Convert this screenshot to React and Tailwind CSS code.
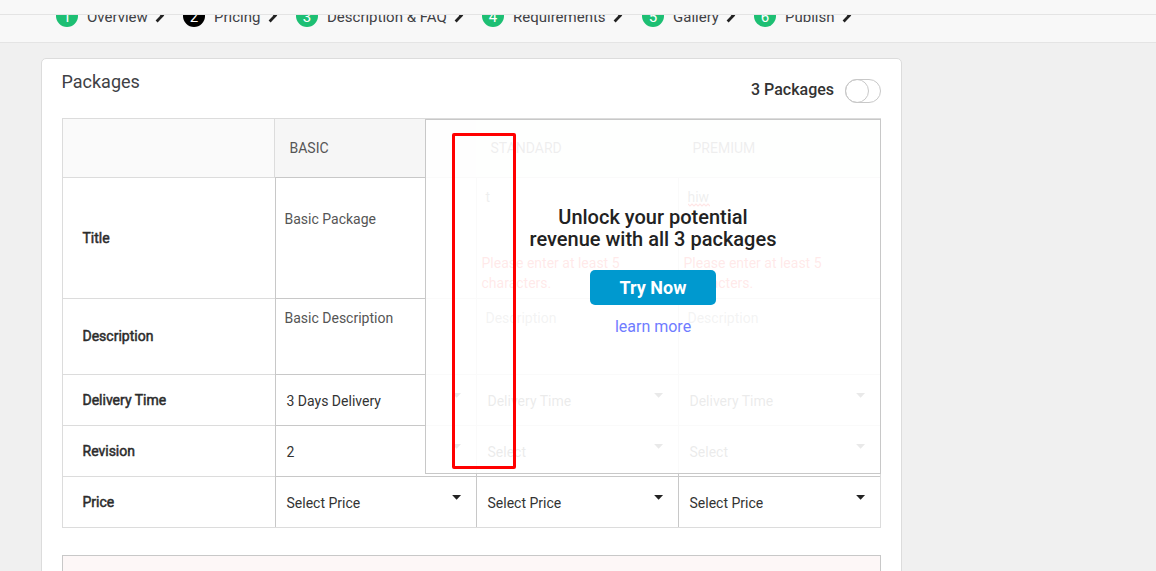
import React from "react";

const steps = [
  { n: 1, label: "Overview", width: "w-[127px]", dot: "bg-[#1dbf73]", text: "w-[68px]" },
  { n: 2, label: "Pricing", width: "w-[113px]", dot: "bg-black", text: "w-[54px]" },
  { n: 3, label: "Description & FAQ", width: "w-[186px]", dot: "bg-[#1dbf73]", text: "w-[127px]" },
  { n: 4, label: "Requirements", width: "w-[160px]", dot: "bg-[#1dbf73]", text: "w-[100px]" },
  { n: 5, label: "Gallery", width: "w-[112px]", dot: "bg-[#1dbf73]", text: "w-[53px]" },
  { n: 6, label: "Publish", width: "w-[112px]", dot: "bg-[#1dbf73]", text: "w-[57px]" },
];

function Chevron() {
  return (
    <svg width="10" height="14" viewBox="0 0 10 14" className="-mt-px shrink-0">
      <path d="M1.6 1 L7.3 6.6 L1.6 12.4" fill="none" stroke="#222" strokeWidth="2.8" />
    </svg>
  );
}

function Step({ n, label, width, dot, text }) {
  return (
    <div className={`flex h-[22px] shrink-0 items-center ${width}`}>
      <span className={`flex size-[22px] shrink-0 items-center justify-center rounded-full pt-[2px] text-[15px] leading-[20px] text-white ${dot}`}>
        {n}
      </span>
      <span className={`ml-[9px] mt-[2px] shrink-0 whitespace-nowrap text-[15px] leading-[22px] text-[#404145] ${text}`}>
        {label}
      </span>
      <Chevron />
    </div>
  );
}

function Label({ className = "", children }) {
  return (
    <div className={`flex items-center border-t border-[#dcdcdc] pl-[19.5px] text-[14px] text-[#2c2c2c] [-webkit-text-stroke:0.5px_#2c2c2c] ${className}`}>
      {children}
    </div>
  );
}

function Cell({ className = "", children }) {
  return <div className={`border-l border-t border-[#c8c8c8] ${className}`}>{children}</div>;
}

function SelectCell({ value }) {
  return (
    <Cell className="flex justify-between pl-[10.5px] pr-[14px] text-[14px] text-[#333]">
      <span className="mt-[16px] leading-[20px]">{value}</span>
      <svg width="10" height="5" viewBox="0 0 10 5" className="mt-[18px]">
        <path d="M0.1 0 H9.1 L4.6 4.8 Z" fill="#222" />
      </svg>
    </Cell>
  );
}

function Squiggle() {
  return (
    <svg width="22" height="4" viewBox="0 0 22 4" className="absolute left-0 top-[16px]">
      <path d="M0 1 L2 3 L4 1 L6 3 L8 1 L10 3 L12 1 L14 3 L16 1 L18 3 L20 1 L22 3" fill="none" stroke="#ff0000" strokeWidth="1.1" />
    </svg>
  );
}

function TitleCell({ value, misspelled }) {
  return (
    <Cell className="pl-[4.5px] text-[14px] leading-[20px]">
      <div className="mt-[9px] pl-[4px] text-[#555]">
        <span className="relative inline-block">
          {value}
          {misspelled && <Squiggle />}
        </span>
      </div>
      <div className="mt-[46px] w-[150px] text-[#ff2020]">Please enter at least 5 characters.</div>
    </Cell>
  );
}

function PackageTable() {
  return (
    <div className="relative mt-[18px] w-[819px]">
      <div className="border-b border-l border-r border-[#dcdcdc]">
        <div className="grid h-[59px] grid-cols-[211px_202px_202px_202px] border-t border-[#dcdcdc] bg-[#fafafa] text-[14px] text-[#555]">
          <div />
          <div className="flex items-center border-l border-[#dcdcdc] bg-[#f6f6f6] pl-[14.5px]">BASIC</div>
          <div className="flex items-center pl-[14.5px]">STANDARD</div>
          <div className="flex items-center pl-[14.5px]">PREMIUM</div>
        </div>
        <div className="grid grid-cols-[212px_201px_202px_202px] grid-rows-[121px_76px_51px_51px_51px]">
          <Label className="pt-px">Title</Label>
          <Cell className="pl-[8.5px] pt-[31px] text-[14px] leading-[20px] text-[#555]">Basic Package</Cell>
          <TitleCell value="t" />
          <TitleCell value="hiw" misspelled />

          <Label>Description</Label>
          <Cell className="pl-[8.5px] pt-[9px] text-[14px] leading-[20px] text-[#555]">Basic Description</Cell>
          <Cell className="pl-[8.5px] pt-[9px] text-[14px] leading-[20px] text-[#888]">Description</Cell>
          <Cell className="pl-[8.5px] pt-[9px] text-[14px] leading-[20px] text-[#888]">Description</Cell>

          <Label className="pt-px">Delivery Time</Label>
          <SelectCell value="3 Days Delivery" />
          <SelectCell value="Delivery Time" />
          <SelectCell value="Delivery Time" />

          <Label className="pt-px">Revision</Label>
          <SelectCell value="2" />
          <SelectCell value="Select" />
          <SelectCell value="Select" />

          <Label className="pt-px">Price</Label>
          <SelectCell value="Select Price" />
          <SelectCell value="Select Price" />
          <SelectCell value="Select Price" />
        </div>
      </div>

      <div className="absolute left-[363px] top-px flex h-[355px] w-[456px] flex-col items-center border border-[#c8c8c8] bg-white/90 pt-[86px]">
        <p className="text-center text-[20px] font-medium leading-[22px] text-[#222]">
          Unlock your potential
          <br />
          revenue with all 3 packages
        </p>
        <button className="mt-[20px] h-[35px] w-[126px] rounded-[5px] bg-[#0099cf] text-[18px] font-bold text-white">
          Try Now
        </button>
        <a className="mt-[11px] text-[16px] leading-[22px] text-[#6f7cff]">learn more</a>
      </div>
      <div className="absolute left-[390px] top-[15px] h-[336px] w-[64px] rounded-[2px] border-3 border-[#ff0000]" />
    </div>
  );
}

export default function App() {
  return (
    <div className="h-[571px] w-full overflow-hidden bg-[#f0f0f0] font-[Roboto,sans-serif]">
      <div className="h-[15px] border-b border-[#e4e4e4] bg-[#f8f8f8]" />
      <nav className="h-[28px] overflow-hidden border-b border-[#e4e4e4] bg-[#f8f8f8]">
        <div className="-mt-[10px] flex pl-[56px]">
          {steps.map((s) => (
            <Step key={s.n} {...s} />
          ))}
        </div>
      </nav>
      <main className="ml-[41px] mt-[15px] h-[560px] w-[861px] rounded-[5px] border border-[#dcdcdc] bg-white pl-[20px]">
        <header className="flex h-[41px] w-[819px] justify-between">
          <h1 className="-ml-[0.5px] mt-[11px] text-[18px] leading-[24px] text-[#404145]">Packages</h1>
          <div className="flex">
            <span className="mt-[20px] text-[16px] font-medium leading-[22px] text-[#333]">3 Packages</span>
            <span className="ml-[11px] mt-[20px] h-[24px] w-[36px] rounded-full border border-[#c8c8c8]">
              <span className="-ml-px -mt-px block size-[24px] rounded-full border border-[#c8c8c8]" />
            </span>
          </div>
        </header>
        <PackageTable />
        <div className="mt-[27px] h-[60px] w-[819px] border border-[#c8c8c8] bg-[#fdf7f7]" />
      </main>
    </div>
  );
}
